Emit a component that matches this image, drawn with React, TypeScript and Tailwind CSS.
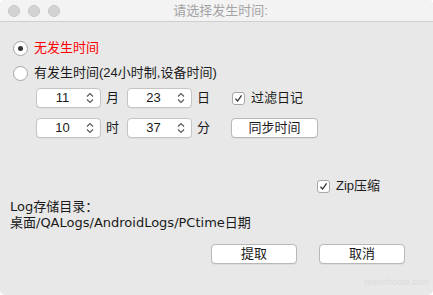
import React from 'react';

const font = { fontFamily: '"Liberation Sans", "Noto Sans CJK SC", sans-serif' };

const Stepper: React.FC<{ value: string }> = ({ value }) => (
  <div className="w-[65px] h-[20px] bg-white border border-[#c4c4c4] rounded-[4px] flex items-center shadow-[0_0.5px_0.5px_rgba(0,0,0,0.08)]">
    <span className="flex-1 text-center text-[13px] text-[#1a1a1a] pl-[2px]">{value}</span>
    <svg width="8" height="12" viewBox="0 0 8 12" className="mr-[6px]">
      <path d="M1 4.5 L4 1.5 L7 4.5" fill="none" stroke="#555" strokeWidth="1.1" />
      <path d="M1 7.5 L4 10.5 L7 7.5" fill="none" stroke="#555" strokeWidth="1.1" />
    </svg>
  </div>
);

const Check: React.FC = () => (
  <div className="w-[13px] h-[13px] bg-white border border-[#a8a8a8] rounded-[3px] flex items-center justify-center">
    <svg width="9" height="9" viewBox="0 0 9 9">
      <path d="M1.5 4.8 L3.6 7 L7.6 1.3" fill="none" stroke="#333" strokeWidth="1.3" />
    </svg>
  </div>
);

const Radio: React.FC<{ on?: boolean }> = ({ on }) => (
  <div className="w-[15px] h-[15px] rounded-full bg-white border border-[#a6a6a6] flex items-center justify-center">
    {on && <div className="w-[5px] h-[5px] rounded-full bg-[#333]" />}
  </div>
);

const Btn: React.FC<{ label: string; w: string }> = ({ label, w }) => (
  <div className={`${w} h-[20px] bg-white border border-[#b8b8b8] rounded-[4px] flex items-center justify-center text-[13px] text-[#1a1a1a] shadow-[0_0.5px_0.5px_rgba(0,0,0,0.1)]`}>
    {label}
  </div>
);

const App: React.FC = () => {
  return (
    <div className="w-[433px] h-[295px] bg-white" style={font}>
      <div className="relative w-full h-full bg-[#e8e8e8] rounded-[5px] overflow-hidden">
        <div className="h-[22px] bg-[#f3f3f3] border-b border-[#cfcfcf] flex items-center relative">
          <div className="flex gap-[8px] pl-[8px]">
            <div className="w-[12px] h-[12px] rounded-full bg-[#d3d3d3] border border-[#c6c6c6]" />
            <div className="w-[12px] h-[12px] rounded-full bg-[#d3d3d3] border border-[#c6c6c6]" />
            <div className="w-[12px] h-[12px] rounded-full bg-[#d3d3d3] border border-[#c6c6c6]" />
          </div>
          <div className="flex-1 text-center text-[13px] text-[#a3a3a3] pr-[52px]">请选择发生时间:</div>
        </div>

        <div className="pl-[13px] pt-[17px]">
          <div className="h-[18px] flex items-center gap-[6px]">
            <Radio on />
            <span className="text-[13px] text-[#ff0000]">无发生时间</span>
          </div>
          <div className="h-[18px] mt-[7px] flex items-center gap-[6px]">
            <Radio />
            <span className="text-[13px] text-[#1a1a1a]">有发生时间(24小时制,设备时间)</span>
          </div>
        </div>

        <div className="pl-[36px] mt-[6px] text-[13px] text-[#1a1a1a]">
          <div className="h-[20px] flex items-center">
            <Stepper value="11" />
            <span className="ml-[5px] w-[21px]">月</span>
            <Stepper value="23" />
            <span className="ml-[5px] w-[35px]">日</span>
            <Check />
            <span className="ml-[6px]">过滤日记</span>
          </div>
          <div className="h-[20px] mt-[10px] flex items-center">
            <Stepper value="10" />
            <span className="ml-[5px] w-[21px]">时</span>
            <Stepper value="37" />
            <span className="ml-[5px] w-[34px]">分</span>
            <Btn label="同步时间" w="w-[87px]" />
          </div>
        </div>

        <div className="pl-[317px] mt-[40px] h-[16px] flex items-center gap-[6px] text-[13px] text-[#1a1a1a]">
          <Check />
          <span>Zip压缩</span>
        </div>

        <div
          className="pl-[10px] mt-[5px] text-[13px] leading-[16px] text-[#1a1a1a]"
          style={{ fontFamily: '"DejaVu Sans", "Noto Sans CJK SC", sans-serif' }}
        >
          <div>Log存储目录：</div>
          <div>桌面/QALogs/AndroidLogs/PCtime日期</div>
        </div>

        <div className="flex justify-end gap-[22px] pr-[28px] mt-[13px]">
          <Btn label="提取" w="w-[86px]" />
          <Btn label="取消" w="w-[86px]" />
        </div>

        <div className="absolute right-[4px] bottom-[6px] text-[9px] italic text-[#dcdcdc]">testerhome.com</div>
      </div>
    </div>
  );
};

export default App;
